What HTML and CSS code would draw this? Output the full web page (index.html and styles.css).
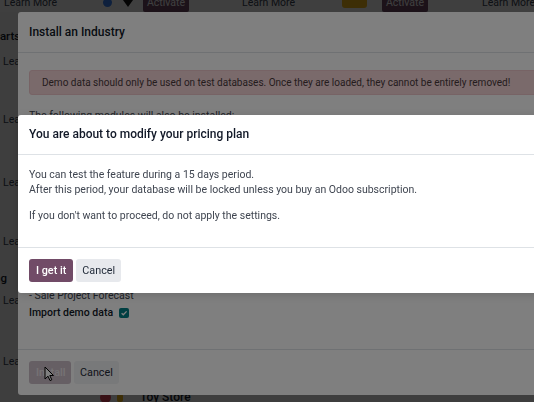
FILE: index.html
```html
<!DOCTYPE html>
<html lang="en">
<head>
<meta charset="utf-8">
<title>Install an Industry</title>
<link rel="stylesheet" href="styles.css">
</head>
<body>
<div class="page">
  <div class="toprow">
    <a class="link">Learn More</a>
    <span class="dot-blue"></span>
    <span class="chev"></span>
    <span class="btn-activate">Activate</span>
    <a class="link">Learn More</a>
    <span class="dot-yellow"></span>
    <span class="btn-activate">Activate</span>
    <a class="link">Learn More</a>
  </div>
  <div class="leftcol">
    <div class="card-title t1">Charts</div>
    <a class="link r1">Learn More</a>
    <a class="link r2">Learn More</a>
    <a class="link r3">Learn More</a>
    <a class="link r4">Learn More</a>
    <div class="card-title t2">Clothing</div>
    <a class="link r5">Learn More</a>
    <a class="link r6">Learn More</a>
    <div class="bottom-card">
      <span class="dot-red"></span>
      <span class="dot-yellow small"></span>
      <span class="card-name">Toy Store</span>
    </div>
  </div>
</div>

<div class="backdrop"></div>
<div class="modal modal-industry">
  <div class="modal-header">
    <h4 class="modal-title">Install an Industry</h4>
  </div>
  <div class="modal-body">
    <div class="alert">Demo data should only be used on test databases. Once they are loaded, they cannot be entirely removed!</div>
    <p class="intro">The following modules will also be installed:</p>
    <ul class="modules">
      <li>- Project</li>
      <li>- Sales</li>
      <li>- Timesheets</li>
      <li>- Planning</li>
      <li>- Field Service</li>
      <li>- Inventory</li>
      <li>- Purchase</li>
      <li>- CRM</li>
      <li>- Invoicing</li>
      <li>- Sign</li>
      <li>- Project Forecast</li>
      <li>- Sale Project Forecast</li>
    </ul>
    <label class="demo">Import demo data
      <span class="checkbox"><svg viewBox="0 0 10 10" width="10" height="10"><path d="M2.6 5.2 L4.3 6.8 L7.6 3.4" fill="none" stroke="#fff" stroke-width="1.3"/></svg></span>
    </label>
  </div>
  <div class="modal-footer">
    <button class="btn btn-primary disabled">Install</button>
    <button class="btn btn-secondary">Cancel</button>
    <svg class="cursor" viewBox="0 0 10 16" width="10" height="16"><path d="M1 1 L1 13 L4 10.2 L6 14.6 L7.8 13.8 L5.8 9.5 L9.5 9.5 Z" fill="#fff" stroke="#000" stroke-width="1"/></svg>
  </div>
</div>

<div class="backdrop"></div>
<div class="modal modal-pricing">
  <div class="modal-header">
    <h4 class="modal-title">You are about to modify your pricing plan</h4>
  </div>
  <div class="modal-body">
    <p>You can test the feature during a 15 days period.<br>After this period, your database will be locked unless you buy an Odoo subscription.</p>
    <p>If you don't want to proceed, do not apply the settings.</p>
  </div>
  <div class="modal-footer">
    <button class="btn btn-primary">I get it</button>
    <button class="btn btn-secondary">Cancel</button>
  </div>
</div>
</body>
</html>
```

FILE: styles.css
```css
* { box-sizing: border-box; }
html, body {
  margin: 0;
  padding: 0;
}
body {
  width: 534px;
  height: 402px;
  overflow: hidden;
  background: #f9fafb;
  font-family: Roboto, "Liberation Sans", sans-serif;
  font-size: 10.5px;
  line-height: 15px;
  color: #3f4550;
}

/* ---------- page behind ---------- */
.page {
  height: 402px;
  overflow: hidden;
}
.toprow {
  display: grid;
  grid-template-columns: 99px 20px 20px 99px 100px 40px 100px 52px;
  align-items: center;
  justify-items: start;
  height: 20px;
  margin-top: -8px;
  padding-left: 4px;
  background: #fff;
}
.link {
  color: #374151;
  white-space: nowrap;
}
.dot-blue {
  width: 9px; height: 9px; border-radius: 50%;
  background: #3b82f6;
}
.chev {
  width: 0; height: 0;
  border-left: 5px solid transparent;
  border-right: 5px solid transparent;
  border-top: 7px solid #111;
  margin-top: 2px;
}
.btn-activate {
  background: #714b67;
  color: #fff;
  width: 46px;
  text-align: center;
  height: 18px;
  line-height: 17px;
  border-radius: 2px;
  margin-top: 2px;
}
.dot-yellow {
  width: 25px; height: 12px;
  background: #f5b818;
  border-radius: 3px;
}

.leftcol {
  display: flex;
  flex-direction: column;
  align-items: flex-start;
  padding-left: 3px;
}
.card-title {
  font-size: 11.5px;
  font-weight: 500;
  color: #111827;
  white-space: nowrap;
}
.t1 { margin-left: -17px; margin-top: 17px; }
.r1 { margin-top: 10px; }
.r2 { margin-top: 43px; }
.r3 { margin-top: 48px; }
.r4 { margin-top: 44px; }
.t2 { margin-top: 22px; margin-left: -39px; }
.r5 { margin-top: 7px; }
.r6 { margin-top: 46px; }
.bottom-card {
  display: flex;
  align-items: center;
  margin-top: 21px;
  margin-left: 97px;
}
.dot-red {
  width: 11px; height: 11px; border-radius: 50%;
  background: #e5455b;
}
.dot-yellow.small {
  width: 6px; height: 8px; margin-left: 6px; border-radius: 2px;
}
.card-name {
  margin-left: 17px;
  font-size: 12px;
  font-weight: 500;
  color: #111827;
}

/* ---------- modals ---------- */
.backdrop {
  position: fixed;
  inset: 0;
  background: rgba(0, 0, 0, 0.5);
}
.modal {
  position: fixed;
  left: 18px;
  width: 600px;
  background: #fff;
  border-radius: 3px;
  display: flex;
  flex-direction: column;
}
.modal-industry { top: 12px; height: 383px; }
.modal-pricing {
  top: 115px;
  height: 178px;
  box-shadow: 0 2px 8px rgba(0, 0, 0, 0.15);
}
.modal-header {
  height: 41px;
  padding: 0 11px;
  display: flex;
  align-items: center;
  border-bottom: 1px solid #dee2e6;
}
.modal-pricing .modal-header { height: 40px; }
.modal-title {
  margin: 0;
  font-size: 12px;
  font-weight: 500;
  color: #111827;
}
.modal-body {
  flex: 1;
  padding: 17px 11px 0;
}
.modal-pricing .modal-body { padding-top: 12px; }
.modal-body p { margin: 0; }
.modal-pricing .modal-body p:first-child { margin-bottom: 11px; }

.alert {
  height: 25px;
  width: 510px;
  display: flex;
  align-items: center;
  padding: 0 12px;
  background: #f4d4d7;
  border: 1px solid #efc6ca;
  border-radius: 3px;
  color: #4b3a3c;
  font-size: 10px;
  white-space: nowrap;
}
.modal-body .intro { margin-top: 13px; }
.modules {
  list-style: none;
  margin: 0;
  padding: 0;
}
.demo {
  display: flex;
  align-items: center;
  margin-top: 2px;
  font-weight: 500;
  font-size: 10.5px;
  color: #111827;
}
.checkbox {
  width: 10px; height: 10px;
  margin-left: 6px;
  background: #017e84;
  border-radius: 2px;
  display: inline-flex;
}

.modal-footer {
  position: relative;
  display: flex;
  gap: 3px;
  padding: 11px;
  border-top: 1px solid #dee2e6;
}
.btn {
  height: 23px;
  padding: 0 6px;
  border: 0;
  border-radius: 3px;
  font-family: Roboto, "Liberation Sans", sans-serif;
  font-size: 10.8px;
}
.btn-primary { background: #714b67; color: #fff; font-weight: 500; padding: 0 7px; }
.btn-primary.disabled { background: #cdbfc9; color: #ece6ea; width: 42px; }
.btn-secondary { background: #e7e9ed; color: #1f2937; }
.modal-industry .btn-secondary { background: #f1f2f4; }
.cursor {
  position: absolute;
  left: 26px;
  top: 16px;
}
```
